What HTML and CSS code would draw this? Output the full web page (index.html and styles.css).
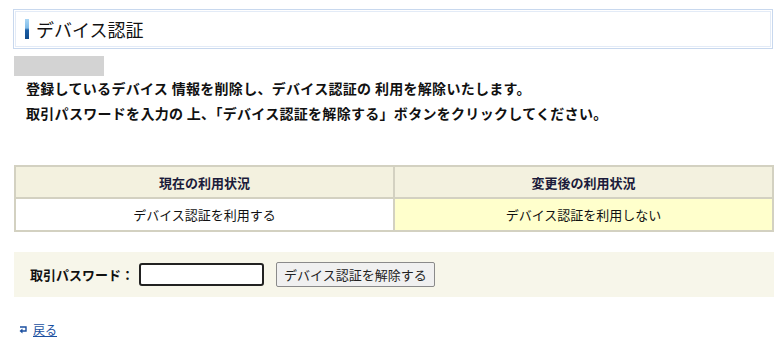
FILE: index.html
```html
<!DOCTYPE html>
<html lang="ja">

<head>
    <meta charset="UTF-8">
    <meta name="viewport" content="width=device-width, initial-scale=1.0">
    <title>デバイス認証</title>
    <link rel="stylesheet" href="styles.css">
</head>

<body>
    <div class="page">
        <h1 class="title"><span class="title-bar"></span>デバイス認証</h1>

        <div class="blank"></div>

        <p class="intro">
            登録しているデバイス 情報を削除し、デバイス認証の 利用を解除いたします。<br>
            取引パスワードを入力の 上、「デバイス認証を解除する」ボタンをクリックしてください。
        </p>

        <table class="status">
            <thead>
                <tr>
                    <th>現在の利用状況</th>
                    <th>変更後の利用状況</th>
                </tr>
            </thead>
            <tbody>
                <tr>
                    <td>デバイス認証を利用する</td>
                    <td class="after">デバイス認証を利用しない</td>
                </tr>
            </tbody>
        </table>

        <form class="confirm">
            <label for="pass">取引パスワード：</label>
            <input type="password" id="pass" class="pass">
            <button type="button" class="release">デバイス認証を解除する</button>
        </form>

        <a class="back" href="#">
            <svg width="8" height="8" viewBox="0 0 8 8">
                <path d="M1 1h6v4H3" fill="none" stroke="#1a4fa0" stroke-width="1.4"/>
                <path d="M0.5 5L3.5 2.5V7.5Z" fill="#1a4fa0"/>
            </svg><span>戻る</span>
        </a>
    </div>
</body>

</html>
```

FILE: styles.css
```css
body {
    margin: 0;
    font-family: "Noto Sans CJK JP", "Liberation Sans", sans-serif;
    color: #111;
}

.page {
    width: 760px;
    padding: 9px 7px 0 13px;
}

.title {
    display: flex;
    align-items: center;
    height: 40px;
    box-sizing: border-box;
    margin: 0;
    padding-left: 11px;
    border: 1px solid #c8d8ee;
    box-shadow: inset 0 0 0 1px #fff, inset 0 0 0 2px #e3ebf7;
    font-size: 18px;
    font-weight: normal;
    color: #111;
}

.title-bar {
    width: 4px;
    height: 20px;
    margin-right: 7px;
    background: linear-gradient(#a9d6f5 0%, #7fbbe8 45%, #1b5ea6 55%, #0f4a8a 100%);
}

.blank {
    width: 90px;
    height: 20px;
    margin: 7px 0 0 1px;
    background-color: #d3d3d3;
}

.intro {
    margin: 0 0 0 13px;
    font-size: 14px;
    font-weight: bold;
    line-height: 25px;
    letter-spacing: 0.3px;
}

.status {
    width: 760px;
    margin: 39px 0 0 1px;
    border: 2px solid #d3d1c1;
    border-collapse: collapse;
    font-size: 13px;
}

.status th,
.status td {
    width: 50%;
    border: 2px solid #d3d1c1;
    text-align: center;
}

.status th {
    height: 28px;
    background-color: #f3f1df;
    color: #1b1b3a;
}

.status td {
    height: 29px;
    background-color: #fff;
}

.status td.after {
    background-color: #ffffcc;
}

.confirm {
    display: flex;
    align-items: center;
    width: 760px;
    height: 45px;
    box-sizing: border-box;
    margin: 20px 0 0 1px;
    padding-left: 16px;
    background-color: #f7f6ea;
    font-size: 13px;
}

.confirm label {
    font-weight: bold;
    margin-right: 5px;
}

.pass {
    width: 125px;
    height: 23px;
    box-sizing: border-box;
    border: 2px solid #222;
    border-radius: 3px;
    margin: 0 12px 0 0;
}

.release {
    height: 25px;
    padding: 0 7px;
    font-family: inherit;
    font-size: 13px;
    color: #222;
    background-color: #f0f0f0;
    border: 1px solid #8a8a8a;
    border-radius: 2px;
}

.back {
    display: inline-flex;
    align-items: center;
    gap: 6px;
    margin: 24px 0 0 6px;
    font-size: 12px;
    color: #1a4fa0;
}

.back span {
    text-decoration: underline;
}
```
